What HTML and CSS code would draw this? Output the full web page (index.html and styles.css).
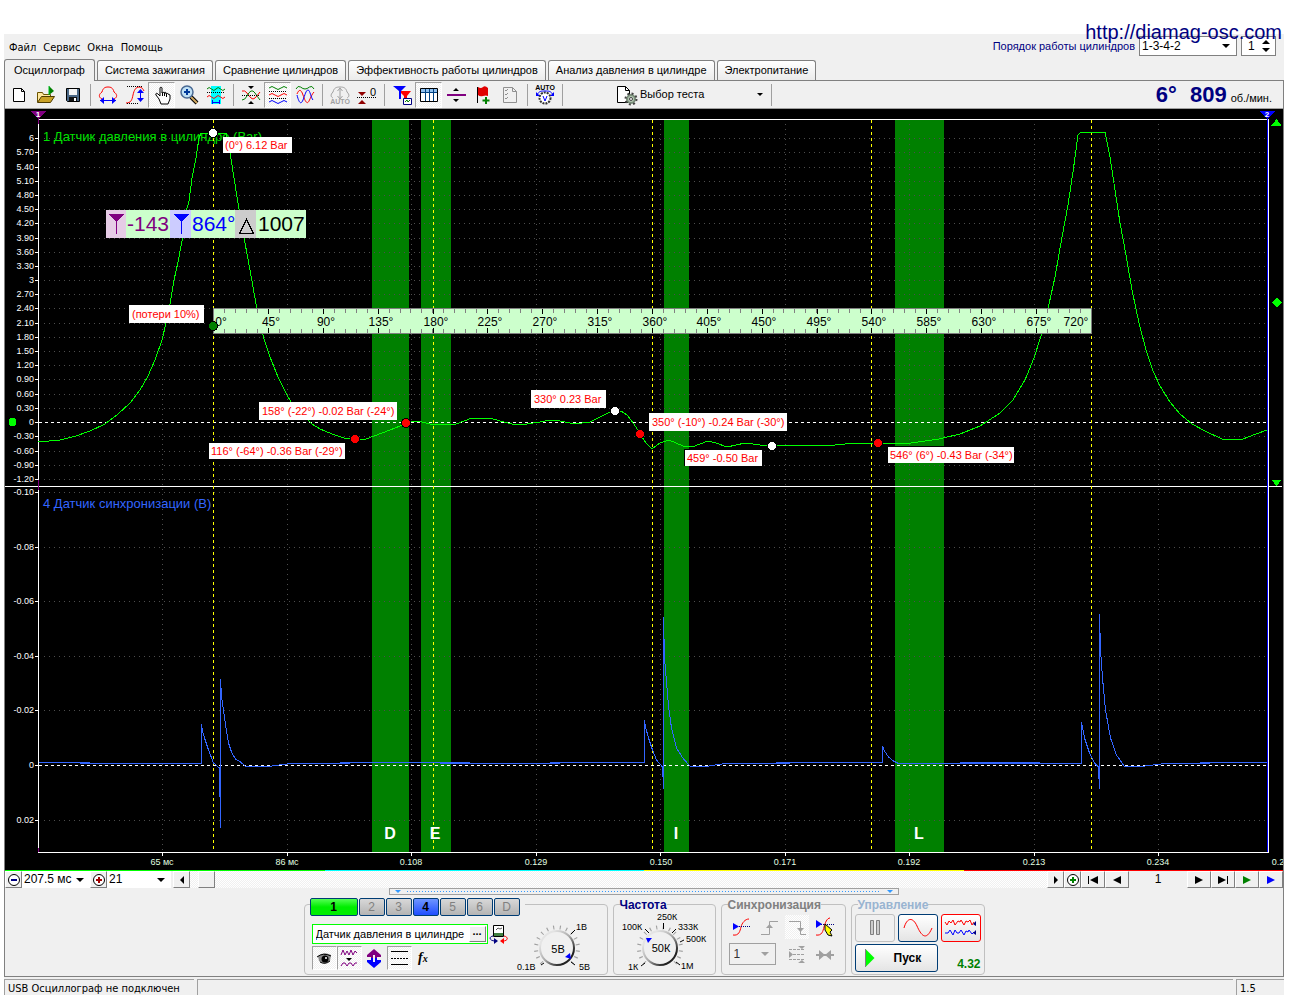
FILE: index.html
```html
<!DOCTYPE html>
<html lang="ru">
<head>
<meta charset="utf-8">
<title>Осциллограф</title>
<link rel="stylesheet" href="styles.css">
</head>
<body>
<a class="site-link" href="http://diamag-osc.com">http://diamag-osc.com</a>
<div class="app">
  <header class="header">
    <div class="header-left">
      <nav class="menu">
        <button>Файл</button><button>Сервис</button><button>Окна</button><button>Помощь</button>
      </nav>
      <div class="tabs" role="tablist">
        <button class="tab tab-active" role="tab" aria-selected="true">Осциллограф</button>
        <button class="tab" role="tab">Система зажигания</button>
        <button class="tab" role="tab">Сравнение цилиндров</button>
        <button class="tab" role="tab">Эффективность работы цилиндров</button>
        <button class="tab" role="tab">Анализ давления в цилиндре</button>
        <button class="tab" role="tab">Электропитание</button>
      </div>
    </div>
    <div class="order">
      <label for="order">Порядок работы цилиндров</label>
      <span class="drop drop-order"><select id="order"><option>1-3-4-2</option></select></span>
      <span class="spin"><input type="number" value="1" aria-label="Цилиндр">
        <svg width="10" height="14" viewBox="0 0 10 14"><path d="M1 5l4-4 4 4zM1 9l4 4 4-4z"/></svg></span>
    </div>
  </header>

  <main class="panel">
    <div class="toolbar">
      <button class="tool" aria-label="Новый"><svg viewBox="0 0 24 24"><path d="M6.500 5.500h8l3 3v10h-11z" fill="#fff" stroke="#000"/><path d="M14.500 5.500v3h3" fill="none" stroke="#000"/></svg></button>
      <button class="tool" aria-label="Открыть"><svg viewBox="0 0 24 24"><path d="M3.500 19V9.500h5l1 2h7v3" fill="#ffe9a0" stroke="#6b5300"/><path d="M3.500 19.500l4-6h13l-4 6z" fill="#c9a227" stroke="#4d3b00"/><path d="M15 3l5 5-5 4z" fill="#008000"/><path d="M15 12V3" stroke="#00c020"/></svg></button>
      <button class="tool" aria-label="Сохранить"><svg viewBox="0 0 24 24"><path d="M5.500 5.500h13v13h-12l-1-1z" fill="#4a6785" stroke="#000"/><path d="M8 6h8v6H8z" fill="#f4f4f4"/><path d="M8 14h8v4H8z" fill="#111"/><path d="M13 15h2v3h-2z" fill="#fff"/></svg></button>
      <i class="sep"></i>
      <button class="tool" aria-label="Период"><svg viewBox="0 0 24 24"><path d="M6 16c-4-2-3-5 0-7 1-4 3-5 6-5s5 1 6 5c3 2 4 5 0 7" fill="none" stroke="red"/><path d="M4 17.500h16" stroke="#00f"/><path d="M8 14v7l-4-3.500zM16 14v7l4-3.500z" fill="#00f"/></svg></button>
      <button class="tool" aria-label="Амплитуда"><svg viewBox="0 0 24 24"><path d="M3 20c5 0 6-3 7-8s3-8 6-8 4 2 5 4" fill="none" stroke="red"/><path d="M4 3.500h16M4 20.500h12" stroke="#000" stroke-dasharray="1 1"/><path d="M17.500 7v11" stroke="#00f"/><path d="M14 10l3.500-4L21 10zM14 15l3.500 4 3.500-4z" fill="#00f"/></svg></button>
      <button class="tool tool-on" aria-label="Рука"><svg viewBox="0 0 24 24"><path d="M9 16l-3-4c-1-2 1-2 2-1l2 2V5c0-1 2-1 2 0v5c0-1 2-1 2 0 0-1 2-1 2 0v1c0-1 2-1 2 0l2 1v4l-2 5h-7z" fill="#fff" stroke="#000"/><path d="M12.500 10v3M14.500 10v3M16.500 11v3" stroke="#000"/></svg></button>
      <button class="tool" aria-label="Масштаб"><svg viewBox="0 0 24 24"><path d="M14 14l6 6" stroke="#000" stroke-width="4"/><path d="M14 14l6 6" stroke="#d0a860" stroke-width="2"/><circle cx="10" cy="9" r="6" fill="#bfe0f5" stroke="#4a6a94" stroke-width="1.500"/><path d="M7 9h6M10 6v6" stroke="#003a9b" stroke-width="2"/></svg></button>
      <button class="tool" aria-label="Измерение"><svg viewBox="0 0 24 24"><path d="M7 3h10v18H7z" fill="#0ff"/><path d="M3 6q2-3 4.500 0t4.500 0 4.500 0 4.500 0" fill="none" stroke="#008000"/><path d="M3 14q2-3 4.500 0t4.500 0 4.500 0 4.500 0" fill="none" stroke="red"/><path d="M3 9.500h18" stroke="#000" stroke-dasharray="1 1"/><path d="M8 19.500h8M8.500 17v4M15.500 17v4" stroke="#00f"/></svg></button>
      <i class="sep"></i>
      <button class="tool" aria-label="По центру"><svg viewBox="0 0 24 24"><path d="M3 8q3-1 5 2t4 5q2 2 4 0t5-6" fill="none" stroke="red"/><path d="M3 17q3 0 5-4t4-5q2-1 4 2t5 7" fill="none" stroke="#008000"/><path d="M3 12.500h18" stroke="#000" stroke-dasharray="1 1"/><path d="M9 3h6l-3 3zM9 21h6l-3-3z"/></svg></button>
      <button class="tool tool-on" aria-label="Раздельно"><svg viewBox="0 0 24 24"><g fill="none"><path d="M3 5q3-3 6 0t6 0 6 0" stroke="#008000"/><path d="M3 12q3-3 6 0t6 0 6 0" stroke="red"/><path d="M3 19q3-3 6 0t6 0 6 0" stroke="#00f"/><path d="M3 8.500h18M3 15.500h18" stroke="#000" stroke-dasharray="1 1"/></g></svg></button>
      <button class="tool" aria-label="Вместе"><svg viewBox="0 0 24 24"><g fill="none"><path d="M3 6q2-4 4.500-2t4.500 2 4.500-2 4.500 2" stroke="#008000"/><path d="M4 11c2-5 4-5 6 1s4 10 6 6 3-7 5-9" stroke="red"/><path d="M4 12c2 8 4 10 6 5s3-10 5-10 3 8 5 10" stroke="#00f"/></g></svg></button>
      <i class="sep"></i>
      <button class="tool" disabled aria-label="Автомасштаб"><svg viewBox="0 0 24 24"><path d="M5 15c-2-1-3-3 0-6 1-4 3-5 7-5s6 1 7 5c3 3 2 5 0 6M12 6v9M9.500 8L12 5l2.500 3M9.500 13l2.500 3 2.500-3" fill="none" stroke="#a0a0a0"/><text class="micro-gray" x="12" y="21">AUTO</text></svg></button>
      <button class="tool" aria-label="Ноль"><svg viewBox="0 0 24 24"><path d="M3 9h8l-4 4zM3 21h8l-4-4z" fill="#900000"/><path d="M2 14.500h19" stroke="#000" stroke-dasharray="1 1"/><text class="icon-text" x="15" y="13">0</text></svg></button>
      <i class="sep"></i>
      <button class="tool" aria-label="Фильтр"><svg viewBox="0 0 24 24"><path d="M9 8h12l-4 5v6h-3v-6z" fill="red"/><path d="M3 3h13l-5 5v8H9V8z" fill="#00f"/><path d="M13.500 15.500h8v6h-8z" fill="#fff" stroke="#000080"/><path d="M15 19l2-2 1 2 2-2" fill="none" stroke="#008000"/></svg></button>
      <button class="tool tool-on" aria-label="Таблица"><svg viewBox="0 0 24 24"><path d="M3.500 5.500h17v13h-17z" fill="#fff" stroke="#000"/><path d="M4 6h16v3H4z" fill="#8fc1f0"/><path d="M4 9.500h16M8.500 6v12M12.500 6v12M16.500 6v12" stroke="#004080"/></svg></button>
      <button class="tool" aria-label="Разделить"><svg viewBox="0 0 24 24"><path d="M3 12h19" stroke="#800080" stroke-width="2"/><path d="M9 8l3-3 3 3zM9 16l3 3 3-3z"/></svg></button>
      <button class="tool" aria-label="Флаг"><svg viewBox="0 0 24 24"><path d="M6.500 4v16" stroke="#000"/><path d="M7 4q3 2 5 0t5 1v8q-2-1-5 0t-5-1z" fill="#e00000"/><path d="M15 14v7M11.500 17.500h7" stroke="#008000" stroke-width="2"/></svg></button>
      <button class="tool" disabled aria-label="Список"><svg viewBox="0 0 24 24"><path d="M5.500 4.500h9l4 4v11h-13zM14.500 4.500v4h4M7 7l1 1 2-2M7 11l1 1 2-2M7 15l1 1 2-2" fill="none" stroke="#909090"/></svg></button>
      <i class="sep"></i>
      <button class="tool" aria-label="Авто"><svg viewBox="0 0 24 24"><text class="micro" x="12" y="7">AUTO</text><circle cx="12" cy="15" r="5.500" fill="#fff" stroke="#333" stroke-width="2" stroke-dasharray="2 1"/><path d="M10 13l2 5 2-5" fill="none" stroke="#00f"/><path d="M4 12c2-4 4-4 8-4s6 0 8 4" fill="none" stroke="#00f"/><path d="M3 9v4h4zM21 9v4h-4z" fill="#00f"/></svg></button>
      <i class="sep"></i>
      <button class="test-pick"><svg width="24" height="24" viewBox="0 0 24 24"><path d="M3.500 3.500h8l4 4v12h-12z" fill="#fff" stroke="#000"/><path d="M11.500 3.500v4h4" fill="none" stroke="#000"/><circle cx="17" cy="16" r="4" fill="#b5c9b5" stroke="#7a8f7a" stroke-width="2"/><circle cx="17" cy="16" r="5.500" fill="none" stroke="#444" stroke-width="2" stroke-dasharray="2 2.300"/><circle cx="17" cy="16" r="1.500" fill="#fff" stroke="#444"/></svg><span>Выбор теста</span><b class="tri"></b></button>
      <i class="sep"></i>
      <p class="rpm"><b>6°</b><b>809</b><span>об./мин.</span></p>
    </div>

    <svg class="scope" viewBox="5 109 1278 761" role="img" aria-label="Осциллограммы">
      <rect x="5" y="109" width="1278" height="761"/>
      <g fill="#008000"><path d="M372 120h37v732h-37zM421 120h30v732h-30zM664 120h25v732h-25zM895 120h49v732h-49z"/></g>
      <g class="grid">
        <path d="M44 138.500H1267M44 152.500H1267M44 167.500H1267M44 181.500H1267M44 195.500H1267M44 209.500H1267M44 223.500H1267M44 238.500H1267M44 252.500H1267M44 266.500H1267M44 280.500H1267M44 294.500H1267M44 308.500H1267M44 323.500H1267M44 337.500H1267M44 351.500H1267M44 365.500H1267M44 379.500H1267M44 394.500H1267M44 408.500H1267M44 436.500H1267M44 451.500H1267M44 465.500H1267M44 479.500H1267M44 492.500H1267M44 547.500H1267M44 601.500H1267M44 656.500H1267M44 710.500H1267M44 820.500H1267"/>
        <path d="M162.500 124V852M287.500 124V852M411.500 124V852M536.500 124V852M660.500 124V852M785.500 124V852M909.500 124V852M1034.500 124V852M1158.500 124V852"/>
      </g>
      <path class="line white" d="M38.500 119V852.500H1268.500V119M38 119.500H1269M5 486.500H1282M35 138.500h3M35 152.500h3M35 167.500h3M35 181.500h3M35 195.500h3M35 209.500h3M35 223.500h3M35 238.500h3M35 252.500h3M35 266.500h3M35 280.500h3M35 294.500h3M35 308.500h3M35 323.500h3M35 337.500h3M35 351.500h3M35 365.500h3M35 379.500h3M35 394.500h3M35 408.500h3M35 422.500h3M35 436.500h3M35 451.500h3M35 465.500h3M35 479.500h3M35 492.500h3M35 547.500h3M35 601.500h3M35 656.500h3M35 710.500h3M35 765.500h3M35 820.500h3M162.500 852v4M287.500 852v4M411.500 852v4M536.500 852v4M660.500 852v4M785.500 852v4M909.500 852v4M1034.500 852v4M1158.500 852v4"/>
      <path class="line" stroke="#00f" d="M1267.500 118V852"/>
      <path class="line" stroke="#800080" d="M38.500 112v12M38.500 480v10M38.500 848v4"/>
      <text class="trace-name" x="43" y="141" fill="#00e000">1 Датчик давления в цилиндре (Bar)</text>
      <text class="trace-name" x="43" y="508" fill="#3366ff">4 Датчик синхронизации (В)</text>
      <path class="line white" stroke-dasharray="3 3" d="M39 422.500H1267M39 765.500H1267"/>
      <path class="line" stroke="#ff0" stroke-dasharray="3 3" d="M213.500 120V852M433.500 120V852M652.500 120V852M871.500 120V852M1091.500 120V852"/>
      <polyline class="line" stroke="#0f0" points="38,442 60,440 76,436 90,431 105,424 118,414 130,403 140,390 148,376 155,360 162,340 167,319 170,304 174,280 178,262 182,241 186,212 189,201 192,178 196,158 199,138 201,133 226,133 230,152 234,178 239,209 245,243 250,270 256,304 260,322 264,339 270,357 278,377 286,393 292,404 304,416 312,424 320,429 332,434 344,438 355,439 366,439 374,436 390,430 400,426 406,422 418,421 430,424 448,425 456,424 464,421 472,418 490,418 500,421 512,424 527,424 540,422 550,420 560,421 575,424 590,422 602,416 610,412 621,411 627,415 634,424 640,434 646,443 652,449 660,443 669,440 676,443 683,446 692,447 700,444 708,441 716,443 727,447 745,443 760,445 772,446 788,445 806,445 825,446 845,444 860,443 911,443 939,439 960,434 980,426 1000,413 1013,400 1025,380 1034,358 1041,336 1049,304 1055,277 1062,237 1068,205 1073,172 1078,135 1080,133 1095,132 1105,132 1110,157 1115,190 1120,223 1126,255 1132,290 1139,323 1146,350 1153,371 1160,386 1170,402 1180,414 1192,424 1205,431 1222,439 1243,439 1256,434 1267,430"/>
      <path class="line" stroke="#3366ff" d="M39 762.500H90M80 763.500H201M290 763.500H350M340 762.500H470M440 763.500H560M550 762.500H644M725 763.500H790M776 762.500H882M898 763.500H1081M960 762.500H1040M1165 763.500H1210M1200 762.500H1267"/>
      <polyline class="line" stroke="#3366ff" points="201.500,764 201.500,724 202.500,731 204.500,738 208.500,750 213.500,763 219.500,768 219.500,796 220.500,796 220.500,828 220.500,679 221.500,696 223.500,710 225.500,725 228.500,743 231.500,752 235.500,759 240.500,762 245.500,766.500 268.500,766.500 290.500,763.500"/>
      <polyline class="line" stroke="#3366ff" points="644.500,763 644.500,720 645.500,727 648.500,738 652.500,750 656.500,760 662.500,767 662.500,776 663.500,776 663.500,789 663.500,617 664.500,658 666.500,682 668.500,706 671.500,728 676.500,748 683.500,759 690.500,766.500 705.500,766.500 725.500,763.500"/>
      <polyline class="line" stroke="#3366ff" points="882.500,763 882.500,746 884.500,751 888.500,757 893.500,761 898.500,763.500"/>
      <polyline class="line" stroke="#3366ff" points="1081.500,764 1081.500,722 1084.500,738 1089.500,753 1094.500,763 1098.500,767 1098.500,778 1099.500,778 1099.500,789 1099.500,614 1100.500,650 1102.500,678 1105.500,710 1110.500,738 1116.500,755 1124.500,766.500 1140.500,766.500 1165.500,763.500"/>
      <g class="axis-y">
        <text x="34" y="141">6</text><text x="34" y="155">5.70</text><text x="34" y="170">5.40</text><text x="34" y="184">5.10</text><text x="34" y="198">4.80</text><text x="34" y="212">4.50</text><text x="34" y="226">4.20</text><text x="34" y="241">3.90</text><text x="34" y="255">3.60</text><text x="34" y="269">3.30</text><text x="34" y="283">3</text><text x="34" y="297">2.70</text><text x="34" y="311">2.40</text><text x="34" y="326">2.10</text><text x="34" y="340">1.80</text><text x="34" y="354">1.50</text><text x="34" y="368">1.20</text><text x="34" y="382">0.90</text><text x="34" y="397">0.60</text><text x="34" y="411">0.30</text><text x="34" y="425">0</text><text x="34" y="439">-0.30</text><text x="34" y="454">-0.60</text><text x="34" y="468">-0.90</text><text x="34" y="482">-1.20</text><text x="34" y="495">-0.10</text><text x="34" y="550">-0.08</text><text x="34" y="604">-0.06</text><text x="34" y="659">-0.04</text><text x="34" y="713">-0.02</text><text x="34" y="768">0</text><text x="34" y="823">0.02</text>
      </g>
      <g class="axis-x">
        <text x="162" y="865">65 мс</text><text x="287" y="865">86 мс</text><text x="411" y="865">0.108</text><text x="536" y="865">0.129</text><text x="661" y="865">0.150</text><text x="785" y="865">0.171</text><text x="909" y="865">0.192</text><text x="1034" y="865">0.213</text><text x="1158" y="865">0.234</text><text x="1283" y="865">0.254</text>
      </g>
      <g class="stroke-name"><text x="390" y="839">D</text><text x="435" y="839">E</text><text x="676" y="839">I</text><text x="919" y="839">L</text></g>

      <g class="ruler">
        <path d="M213.500 308.500H1091V333.500H213.500z" fill="#cfc" stroke="#808080"/>
        <path d="M224 311H1090M224 331H1090" stroke="#808080" stroke-width="4" stroke-dasharray="1 9.970"/>
        <path d="M268 311.500H1085M268 330.500H1085" stroke="#000" stroke-width="5" stroke-dasharray="1 53.850"/>
        <text x="221" y="326">0°</text><text x="271" y="326">45°</text><text x="326" y="326">90°</text><text x="381" y="326">135°</text><text x="436" y="326">180°</text><text x="490" y="326">225°</text><text x="545" y="326">270°</text><text x="600" y="326">315°</text><text x="655" y="326">360°</text><text x="709" y="326">405°</text><text x="764" y="326">450°</text><text x="819" y="326">495°</text><text x="874" y="326">540°</text><text x="929" y="326">585°</text><text x="984" y="326">630°</text><text x="1039" y="326">675°</text><text x="1076" y="326">720°</text>
      </g>

      <g class="note">
        <rect x="223" y="137" width="69" height="16"/><text x="225" y="149">(0°) 6.12 Bar</text>
        <rect x="129" y="305" width="75" height="18"/><text x="132" y="318">(потери 10%)</text>
        <rect x="259" y="402" width="138" height="18"/><text x="262" y="415">158° (-22°) -0.02 Bar (-24°)</text>
        <rect x="209" y="443" width="136" height="16"/><text x="211" y="455">116° (-64°) -0.36 Bar (-29°)</text>
        <rect x="531" y="390" width="75" height="18"/><text x="534" y="403">330° 0.23 Bar</text>
        <rect x="649" y="413" width="138" height="18"/><text x="652" y="426">350° (-10°) -0.24 Bar (-30°)</text>
        <rect x="684" y="449" width="78" height="17" fill="#000"/><rect x="685" y="450" width="77" height="16"/><text x="687" y="462">459° -0.50 Bar</text>
        <rect x="887" y="446" width="127" height="17" fill="#000"/><rect x="888" y="447" width="126" height="16"/><text x="890" y="459">546° (6°) -0.43 Bar (-34°)</text>
      </g>
      <g stroke="#000">
        <g fill="#fff"><circle cx="213" cy="133" r="4.500"/><circle cx="615" cy="411" r="4.500"/><circle cx="772" cy="446" r="4.500"/></g>
        <g fill="red"><circle cx="355" cy="439" r="4.500"/><circle cx="406" cy="423" r="4.500"/><circle cx="640" cy="434" r="4.500"/><circle cx="878" cy="443" r="4.500"/></g>
        <circle cx="213" cy="326" r="4.500" fill="#008000"/><circle cx="12.500" cy="422" r="4.500" fill="#0f0"/>
      </g>

      <g class="cursors">
        <path d="M106 210h200v28H106z" fill="#cfc"/>
        <path d="M106 210h20v28h-20z" fill="#e6cce6"/><path d="M170 210h21v28h-21z" fill="#ccf"/><path d="M235 210h21v28h-21z" fill="#ccc"/>
        <path d="M108 214h17l-8 7v13h-1v-13z" fill="#800080"/><path d="M173 214h17l-8 7v13h-1v-13z" fill="#00f"/>
        <path d="M239.500 233.500h14l-7-14z" fill="none" stroke="#000"/>
        <text x="127" y="231" fill="#800080">-143</text><text x="192" y="231" fill="#00f">864°</text><text x="258" y="231">1007</text>
      </g>

      <path d="M31 111h15l-7 8h-1z" fill="#800080"/><text class="flag" x="38" y="117">1</text>
      <path d="M1260 111h15l-7 8h-1z" fill="#00f"/><text class="flag" x="1267" y="117">2</text>
      <path d="M1276.500 119l5 6.500h-10zM1276.500 486l5-6h-10zM1276.500 297.500l5 5-5 5-5-5z" fill="#0f0"/>
    </svg>
    <div class="strip"><i></i><i></i><i></i><i></i></div>

    <div class="timebar">
      <button class="btn" aria-label="Меньше"><svg width="14" height="14" viewBox="0 0 14 14"><circle cx="7" cy="7" r="5.500" fill="#fff" stroke="#000"/><path d="M4 7h6" stroke="#000080" stroke-width="2"/></svg></button>
      <span class="drop drop-span"><select aria-label="Длительность"><option>207.5 мс</option></select></span>
      <button class="btn" aria-label="Больше"><svg width="14" height="14" viewBox="0 0 14 14"><circle cx="7" cy="7" r="5.500" fill="#fff" stroke="#000"/><path d="M4 7h6M7 4v6" stroke="#a00000" stroke-width="2"/></svg></button>
      <span class="drop drop-zoom"><select aria-label="Масштаб"><option>21</option></select></span>
      <button class="btn btn-left" aria-label="Влево"><svg width="12" height="12" viewBox="0 0 12 12"><path d="M8 2v8L4 6z"/></svg></button>
      <input class="scroll" type="range" min="0" max="100" value="1" aria-label="Прокрутка">
      <button class="btn" aria-label="Вправо"><svg width="12" height="12" viewBox="0 0 12 12"><path d="M4 2v8l4-4z"/></svg></button>
      <button class="btn" aria-label="Добавить кадр"><svg width="14" height="14" viewBox="0 0 14 14"><circle cx="7" cy="7" r="5.500" fill="#fff" stroke="#000"/><path d="M4 7h6M7 4v6" stroke="#008000" stroke-width="2"/></svg></button>
      <button class="btn btn-wide" aria-label="В начало"><svg width="14" height="12" viewBox="0 0 14 12"><path d="M2 2h1v8H2zM12 2v8L4 6z"/></svg></button>
      <button class="btn btn-wide" aria-label="Назад"><svg width="14" height="12" viewBox="0 0 14 12"><path d="M11 2v8L3 6z"/></svg></button>
      <output class="frame-no">1</output>
      <button class="btn btn-wide" aria-label="Вперёд"><svg width="14" height="12" viewBox="0 0 14 12"><path d="M3 2v8l8-4z"/></svg></button>
      <button class="btn btn-wide" aria-label="В конец"><svg width="14" height="12" viewBox="0 0 14 12"><path d="M11 2h1v8h-1zM2 2v8l8-4z"/></svg></button>
      <button class="btn btn-wide" aria-label="Воспроизвести"><svg width="14" height="12" viewBox="0 0 14 12"><path d="M3 2v8l8-4z" fill="#008000"/></svg></button>
      <button class="btn btn-wide" aria-label="Воспроизвести всё"><svg width="14" height="12" viewBox="0 0 14 12"><path d="M3 2v8l8-4z" fill="#00f"/></svg></button>
    </div>

    <div class="splitter"><b></b><i></i><b></b></div>

    <div class="controls">
      <fieldset class="group">
        <legend class="channels">
          <button class="ch ch-green">1</button><button class="ch" disabled>2</button><button class="ch" disabled>3</button><button class="ch ch-blue">4</button><button class="ch" disabled>5</button><button class="ch" disabled>6</button><button class="ch" disabled>D</button>
        </legend>
        <div class="channel-body">
          <div class="channel-col">
            <div class="sensor"><input value="Датчик давления в цилиндре" aria-label="Датчик"><button class="btn" aria-label="Выбрать">...</button></div>
            <div class="row">
              <button class="tool tool-on" aria-label="Показать"><svg viewBox="0 0 24 24"><path d="M6 10q6-5 13-1l-1 6q-6 5-11 0z" fill="#888"/><circle cx="13" cy="13" r="3.500"/><path d="M5 11q6-5 14-1M8 16q5 3 10-1" fill="none" stroke="#000"/><circle cx="14" cy="12" r="1" fill="#fff"/></svg></button>
              <button class="tool tool-on" aria-label="Сглаживание"><svg viewBox="0 0 24 24"><path d="M4 9l2-5 2 5 2-4 2 4 2-5 2 5 2-4 2 2M4 20l2-3h2l2 3 2-3h2l2 3 2-3h2" fill="none" stroke="#800080"/><path d="M9 12h6l-3 3z"/></svg></button>
              <button class="tool" aria-label="Инверсия"><svg viewBox="0 0 24 24"><path d="M12 3l7 6v2h-4v2H9v-2H5V9z" fill="#800080"/><path d="M12 22l7-6v-2h-4v-2H9v2H5v2z" fill="#00f"/><path d="M11 9h2v7h-2z" fill="#f0f0f0"/></svg></button>
              <button class="tool tool-on" aria-label="Уровни"><svg viewBox="0 0 24 24"><path d="M4 5.500h17M4 18.500h17" stroke="#000"/><path d="M4 12.500h17" stroke="#000" stroke-dasharray="2 1"/></svg></button>
              <button class="tool" aria-label="Функция"><svg viewBox="0 0 24 24"><text class="fx" x="6" y="16">f<tspan class="fx-sub">x</tspan></text></svg></button>
            </div>
          </div>
          <button class="tool swap" aria-label="Поменять"><svg viewBox="0 0 24 24"><path d="M6.500 2.500h10v11h-10z" fill="#fff" stroke="#000"/><path d="M7 10h9v3H7z" fill="#408040"/><path d="M9 7l2-2 2 1 2-1" fill="none" stroke="#555"/><path d="M6 13c-5 1-3 5 2 5" fill="none" stroke="#000080"/><path d="M7 15v6l4-3z" fill="#000080"/><path d="M17 13c5 1 4 5-1 5" fill="none" stroke="red"/><path d="M17 15v6l-4-3z" fill="red"/></svg></button>
          <svg class="knob" width="90" height="64" viewBox="515 910 90 64">
            <defs><linearGradient id="rim" x1="0" y1="0" x2="1" y2="1"><stop offset=".2" stop-color="#e4e4e4"/><stop offset=".5" stop-color="#aaa"/><stop offset=".8" stop-color="#222"/></linearGradient></defs>
            <path class="knob-ticks" pathLength="270" d="M542 963A21 21 0 1 1 572 963"/>
            <path d="M541 965l3-2M571 934l4-4M571 962l4 3" stroke="#000"/>
            <circle cx="557" cy="948" r="17" fill="#f0f0f0" stroke="url(#rim)" stroke-width="2"/>
            <path d="M565 957l5-4 1 6z" fill="#00f"/>
            <text class="knob-value" x="558" y="953">5В</text>
            <text x="576" y="930">1В</text><text x="517" y="970">0.1В</text><text x="579" y="970">5В</text>
          </svg>
        </div>
      </fieldset>

      <fieldset class="group">
        <legend class="navy">Частота</legend>
        <svg class="knob" width="95" height="64" viewBox="618 910 95 64">
          <path class="knob-ticks" pathLength="270" d="M646 963A21 21 0 1 1 676 963"/>
          <path d="M642 966l4-3M646 929l4 4M664.500 923v6M673 933l4-4M681 942l4-2M677 962l4 3" stroke="#000"/>
          <circle cx="661" cy="948" r="17" fill="#f0f0f0" stroke="url(#rim)" stroke-width="2"/>
          <path d="M647 938h6l-4 5z" fill="#00f"/>
          <text class="knob-value" x="662" y="952">50К</text>
          <text x="629" y="970">1К</text><text x="623" y="930">100К</text><text x="658" y="920">250К</text><text x="679" y="930">333К</text><text x="687" y="942">500К</text><text x="682" y="969">1М</text>
        </svg>
      </fieldset>

      <fieldset class="group">
        <legend class="gray">Синхронизация</legend>
        <div class="sync">
          <button class="tool" aria-label="Уровень"><svg viewBox="0 0 24 24"><path d="M4 20c6 1 7-4 8-8s4-8 8-8" fill="none" stroke="red"/><path d="M4 11.500h17" stroke="#000080" stroke-dasharray="1 1"/><path d="M4 8v7l6-3.500z" fill="#00f"/></svg></button>
          <button class="tool" disabled aria-label="Фронт"><svg viewBox="0 0 24 24"><path d="M4 19.500h8.500v-13H21" fill="none" stroke="#a0a0a0"/><path d="M9 13l3.500-4 3.500 4z" fill="#a0a0a0"/></svg></button>
          <button class="tool tool-off" disabled aria-label="Спад"><svg viewBox="0 0 24 24"><path d="M4 6.500h11.500v13H21" fill="none" stroke="#a0a0a0"/><path d="M12 13l3.500 4 3.500-4z" fill="#a0a0a0"/></svg></button>
          <button class="tool" aria-label="Вручную"><svg viewBox="0 0 24 24"><path d="M3 20c6 1 7-4 8-8s3-9 6-9" fill="none" stroke="red"/><path d="M4 9.500h17" stroke="#000080" stroke-dasharray="1 1"/><path d="M3 5v8l6-4z" fill="#00f"/><path d="M12 9l7 6-2 2 2 4-4-1-3-5z" fill="#ff0" stroke="#000"/></svg></button>
          <span class="drop drop-sync"><select disabled aria-label="Канал"><option>1</option></select></span>
          <button class="tool" disabled aria-label="Зона"><svg viewBox="0 0 24 24"><path d="M4 6.500h16M4 16.500h16M4 11.500h16" stroke="#a0a0a0" stroke-dasharray="3 1"/><path d="M4 8v7l4-3.500zM13 3h7l-3 3zM13 20h7l-3-3z" fill="#a0a0a0"/></svg></button>
          <button class="tool" disabled aria-label="Центр"><svg viewBox="0 0 24 24"><path d="M3 12h18" stroke="#a0a0a0" stroke-width="2"/><path d="M6 7l6 5-6 5zM18 7l-6 5 6 5z" fill="#a0a0a0"/></svg></button>
        </div>
      </fieldset>

      <fieldset class="group">
        <legend class="steel">Управление</legend>
        <div class="run">
          <button class="big big-off" disabled aria-label="Пауза"><svg width="30" height="22" viewBox="0 0 30 22"><path d="M10.500 3.500h3v14h-3zM16.500 3.500h3v14h-3z" fill="#ccc" stroke="#808080"/></svg></button>
          <button class="big" aria-label="Кадр"><svg width="30" height="22" viewBox="0 0 30 22"><path d="M1 11C4 0 10 0 14 9s9 16 15 2" fill="none" stroke="red"/></svg></button>
          <button class="big big-red" aria-label="Поток"><svg width="34" height="22" viewBox="0 0 34 22"><path d="M1 5l2 3 2-4 2 2 2-3 2 5 3-4 2 1 1-2 3 5 2-4 2 1 2-2 2 5 2-3" fill="none" stroke="red"/><path d="M1 16h3l2-3 3 5 2-5 2 3 2 0 2-3 3 5 2-4 2 1 1-2 3 4 2-2" fill="none" stroke="#00f"/><path d="M32 4v5l-3-2zM32 13v5l-3-2z" fill="#000080"/></svg></button>
          <button class="big start"><svg width="12" height="20" viewBox="0 0 12 20"><path d="M1.500 1v18l9-9z" fill="#0f0"/><path d="M1.500 1v18" stroke="#808080"/></svg><span>Пуск</span></button>
          <output class="rate">4.32</output>
        </div>
      </fieldset>
    </div>
  </main>

  <footer class="status"><span>USB Осциллограф не подключен</span><span></span><span>1.5</span></footer>
</div>
</body>
</html>
```
FILE: styles.css
```css
* { box-sizing: border-box; }

body {
  margin: 0;
  background: #fff;
  color: #000;
  font: 11px/13px "Liberation Sans", sans-serif;
}

button, select, input { font: inherit; color: inherit; margin: 0; padding: 0; }
button { background: none; border: 0; }
select, input { appearance: none; border: 0; background: transparent; outline: 0; border-radius: 0; }
svg { display: block; flex: none; }

.site-link {
  position: absolute;
  top: 20px;
  right: 14px;
  z-index: 1;
  color: #000080;
  font-size: 20px;
  line-height: 24px;
  text-decoration: none;
}

.app { margin: 34px 12px 0 4px; background: #f0f0f0; }

/* menu, tabs, cylinder order */
.header { display: flex; justify-content: space-between; height: 46px; }
.header-left { display: flex; flex-direction: column; justify-content: space-between; }
.menu {
  display: flex;
  gap: 7px;
  padding: 7px 5px 0;
  font-family: "DejaVu Sans Condensed", "DejaVu Sans", sans-serif;
  font-stretch: condensed;
}
.tabs { display: flex; align-items: flex-end; gap: 2px; }
.tab {
  height: 20px;
  padding: 0 7px;
  border: 1px solid #808080;
  border-bottom: 0;
  border-radius: 3px 3px 0 0;
  background: linear-gradient(#fff, #ebebeb);
  white-space: nowrap;
}
.tab-active { height: 22px; padding: 0 9px; margin-bottom: -1px; background: #f0f0f0; }
.order { display: flex; align-items: flex-start; gap: 4px; padding: 2px 8px 0 0; }
.order label { color: #000080; line-height: 21px; }

.drop { position: relative; display: flex; background: #fff; }
.drop select { width: 100%; padding-left: 2px; }
.drop::after {
  content: "";
  position: absolute;
  top: 50%;
  right: 6px;
  border: 4px solid transparent;
  border-top-color: #000;
  border-bottom: 0;
  transform: translateY(-50%);
  pointer-events: none;
}
.drop-order { width: 98px; height: 20px; border: 1px solid #808080; font-size: 12px; }
.spin {
  display: flex;
  align-items: center;
  width: 35px;
  height: 20px;
  padding-left: 6px;
  border: 1px solid #808080;
  background: #fff;
}
.spin input { width: 13px; appearance: textfield; font-size: 12px; }
.spin input::-webkit-inner-spin-button { appearance: none; margin: 0; }

/* toolbar */
.panel { border: 1px solid #808080; }
.toolbar { display: flex; align-items: center; height: 28px; border-bottom: 1px solid #a0a0a0; }
.tool { display: flex; align-items: center; justify-content: center; width: 27px; height: 26px; flex: none; }
.tool svg { width: 24px; height: 24px; }
.tool-on, .tool-off {
  background: repeating-conic-gradient(#fff 0 25%, #f0f0f0 0 50%) 0 0 / 2px 2px;
}
.tool-on { border: 1px solid #a0a0a0; border-right-color: #fff; border-bottom-color: #fff; }
.sep { width: 1px; height: 22px; margin: 0 3px 0 4px; background: #a0a0a0; flex: none; }
.micro, .micro-gray { font: bold 7px "Liberation Sans", sans-serif; text-anchor: middle; }
.micro-gray { fill: #a0a0a0; }
.icon-text { font-size: 11px; }
.test-pick { display: flex; align-items: center; gap: 2px; width: 153px; margin-left: 48px; padding-right: 4px; }
.tri {
  margin-left: auto;
  border: 3px solid transparent;
  border-top-color: #000;
  border-bottom: 0;
}
.rpm { display: flex; align-items: baseline; gap: 13px; margin: 0 11px 0 auto; }
.rpm b { color: #000080; font-size: 22px; line-height: 26px; }
.rpm span { margin-left: -9px; }

/* oscilloscope */
.scope { width: 100%; height: auto; shape-rendering: crispEdges; }
.scope text { white-space: pre; }
.line { fill: none; stroke-width: 1; }
.white { stroke: #fff; }
.grid { fill: none; stroke: #4d4d4d; stroke-dasharray: 1 4; }
.trace-name { font-size: 13px; }
.axis-y, .axis-x { font-size: 9px; fill: #fff; }
.axis-y { text-anchor: end; }
.axis-x { text-anchor: middle; fill: #e0ffe0; }
.stroke-name { font-size: 16px; font-weight: bold; fill: #fff; text-anchor: middle; }
.ruler { font-size: 12px; text-anchor: middle; }
.note rect:not([fill]) { fill: #fff; }
.note text { fill: #f00; }
.cursors { font-size: 21px; }
.flag { font-size: 8px; font-weight: bold; fill: #fff; text-anchor: middle; }

.strip { display: flex; height: 1px; }
.strip i { flex: 1; background: #0f0; }
.strip i:nth-child(2) { background: #0ff; }
.strip i:nth-child(3) { background: #ff0; }
.strip i:nth-child(4) { background: #f00; }

/* time bar */
.timebar { display: flex; height: 17px; }
.btn {
  display: flex;
  align-items: center;
  justify-content: center;
  width: 17px;
  flex: none;
  border: 1px solid #fff;
  border-right-color: #808080;
  border-bottom-color: #808080;
  background: #f0f0f0;
}
.btn-wide { width: 24px; }
.btn-left { margin-left: 2px; }
.drop-span { width: 68px; font-size: 12px; }
.drop-zoom { width: 64px; font-size: 12px; }
.scroll {
  flex: 1;
  min-width: 0;
  background: repeating-conic-gradient(#fff 0 25%, #f0f0f0 0 50%) 0 0 / 2px 2px;
}
.scroll::-webkit-slider-thumb {
  appearance: none;
  width: 17px;
  height: 17px;
  border: 1px solid #fff;
  border-right-color: #808080;
  border-bottom-color: #808080;
  background: #f0f0f0;
}
.frame-no { width: 58px; text-align: center; line-height: 17px; font-size: 12px; }

.splitter {
  display: flex;
  align-items: center;
  gap: 6px;
  width: 510px;
  height: 7px;
  margin: 0 auto;
  padding: 0 5px;
  border: 1px solid #a0a0a0;
}
.splitter b { border: 3px solid transparent; border-top-color: #3399ff; border-bottom: 0; }
.splitter i { flex: 1; height: 1px; background: repeating-linear-gradient(90deg, #3399ff 0 1px, transparent 1px 3px); }

/* control groups */
.controls { display: flex; justify-content: center; gap: 5px; padding: 3px 0 1px; }
.group {
  min-width: 0;
  height: 77px;
  margin: 0;
  padding: 0 3px;
  border: 1px solid #c0c0c0;
  border-radius: 4px;
}
.group legend { height: 12px; margin-left: 3px; padding: 0; font-size: 12px; line-height: 14px; font-weight: bold; }
.navy { color: #000080; }
.gray { color: #808080; }
.steel { color: #99b4d1; }
.group .channels { display: flex; gap: 1px; margin-left: 2px; width: 215px; font-weight: normal; }
.ch {
  width: 26px;
  height: 18px;
  border: 1px solid #003c74;
  border-radius: 2px;
  background: linear-gradient(#d8d8d8, #b4b4b4);
  color: #808080;
}
.ch-green { width: 48px; background: linear-gradient(#5f5, #0e0 50%); color: #000; font-weight: bold; }
.ch-blue { background: linear-gradient(#6f96ff, #1f4dff); color: #000; font-weight: bold; }
.channel-body { display: flex; align-items: flex-start; width: 296px; }
.channel-col { width: 180px; padding: 14px 0 0 4px; }
.sensor { display: flex; width: 176px; height: 20px; margin-bottom: 2px; border: 1px solid #0f0; background: #fff; }
.sensor input { flex: 1; min-width: 0; padding-left: 3px; }
.sensor .btn { margin: 1px; font-weight: bold; line-height: 8px; align-items: flex-start; }
.row { display: flex; }
.row .tool { width: 25px; height: 24px; }
.swap { margin: 12px 2px 0 -2px; }
.knob { font-size: 9px; }
.knob-ticks { fill: none; stroke: #a0a0a0; stroke-width: 4; stroke-dasharray: 3 14.8; }
.knob-value { font-size: 11px; text-anchor: middle; }
.fx { font: italic bold 14px "Liberation Serif", serif; }
.fx-sub { font-size: 10px; }

.sync { display: grid; grid-template-columns: repeat(4, 24px); gap: 4px; width: 117px; padding: 5px 0 0 4px; }
.sync .tool { width: 24px; height: 24px; }
.drop-sync { grid-column: span 2; width: 47px; height: 22px; border: 1px solid #a0a0a0; background: #f0f0f0; font-size: 12px; }
.drop-sync::after { border-top-color: #a0a0a0; }
.drop-sync select { padding-left: 4px; opacity: 1; color: #333; }

.run { display: grid; grid-template-columns: repeat(3, 40px); gap: 2px 3px; padding-top: 4px; }
.big {
  display: flex;
  align-items: center;
  justify-content: center;
  height: 28px;
  border: 1px solid #003c74;
  border-radius: 3px;
  background: linear-gradient(#fff, #e4e4e4);
}
.big-off { border-color: #c0c0c0; background: #f0f0f0; }
.big-red { border-color: #f00; }
.start { grid-column: span 2; justify-content: flex-start; gap: 18px; padding-left: 8px; font-size: 12px; font-weight: bold; }
.rate { align-self: end; margin-bottom: 1px; text-align: right; color: #008000; font-size: 12px; font-weight: bold; }

.status {
  display: flex;
  gap: 3px;
  padding-top: 2px;
  font-family: "DejaVu Sans Condensed", "DejaVu Sans", sans-serif;
  font-stretch: condensed;
}
.status span { height: 16px; padding: 2px 3px 0; border: 1px solid #a0a0a0; border-right: 0; border-bottom: 0; white-space: nowrap; }
.status span:first-child { width: 190px; }
.status span:nth-child(2) { flex: 1; }
.status span:last-child { width: 48px; }
```
